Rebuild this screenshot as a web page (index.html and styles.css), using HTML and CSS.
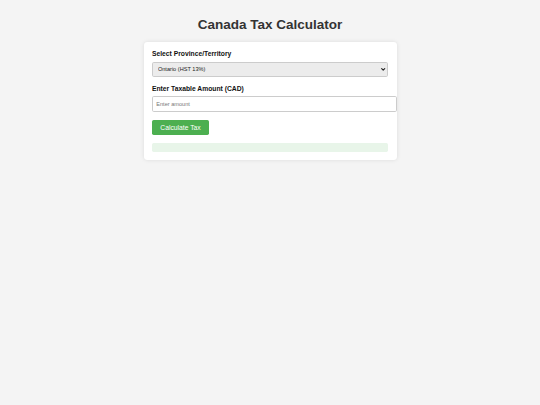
FILE: index.html
```html
<!DOCTYPE html>
<html lang="en">
<head>
<meta charset="UTF-8">
<title>Canada Tax Calculator</title>
<link rel="stylesheet" href="styles.css">
</head>
<body>
  <h1 class="title">Canada Tax Calculator</h1>
  <div class="card">
    <label class="field-label" for="province">Select Province/Territory</label>
    <div class="select-wrap">
      <select id="province" class="select">
        <option>Ontario (HST 13%)</option>
        <option>Alberta (GST 5%)</option>
        <option>British Columbia (GST 5% + PST 7%)</option>
        <option>Quebec (GST 5% + QST 9.975%)</option>
      </select>
      <svg class="chevron" viewBox="0 0 10 7" aria-hidden="true">
        <path d="M1.5 1.5 L5 5 L8.5 1.5" fill="none" stroke="#222" stroke-width="2.6" stroke-linecap="round" stroke-linejoin="round"/>
      </svg>
    </div>
    <label class="field-label" for="amount">Enter Taxable Amount (CAD)</label>
    <input id="amount" class="input" type="number" placeholder="Enter amount">
    <button class="btn" type="button">Calculate Tax</button>
    <div class="result"></div>
  </div>
</body>
</html>
```

FILE: styles.css
```css
html, body {
  margin: 0;
  background: #f4f4f4;
}
body {
  padding: 8.4px;
  font-family: "Liberation Sans", Arial, sans-serif;
  font-size: 6.75px;
  color: #333;
}
.title {
  font-size: 13.5px;
  font-weight: bold;
  text-align: center;
  color: #333;
  margin: 9px 0 9.6px;
}
.card {
  max-width: 253px;
  margin: 0 auto;
  box-sizing: border-box;
  background: #fff;
  padding: 8.4px;
  border-radius: 3.4px;
  box-shadow: 0 0 4px rgba(0, 0, 0, 0.1);
}
.field-label {
  display: block;
  font-weight: bold;
  color: #111;
  margin-bottom: 4.2px;
}
.select-wrap {
  position: relative;
  margin: 0 0 8.4px;
}
.select,
.input {
  display: block;
  width: 100%;
  font-family: "Liberation Sans", Arial, sans-serif;
  font-size: 5.6px;
  border: 0.5px solid #ccc;
  border-radius: 1.7px;
  color: #222;
}
.select {
  box-sizing: border-box;
  -webkit-appearance: none;
  appearance: none;
  background-color: #ececec;
  height: 15.2px;
  padding: 0 10px 0 5px;
  margin: 0;
}
.chevron {
  position: absolute;
  right: 2.6px;
  top: 6.1px;
  width: 4.4px;
  height: 3px;
  pointer-events: none;
}
.input {
  box-sizing: content-box;
  background: #fff;
  height: 7px;
  padding: 3.2px 3.4px;
  margin: 0 0 8.4px;
}
.input::placeholder {
  color: #777;
}
.btn {
  display: block;
  font-family: "Liberation Sans", Arial, sans-serif;
  font-size: 6.75px;
  color: #fff;
  background: #4caf50;
  border: none;
  border-radius: 1.7px;
  padding: 3.9px 8.4px;
  margin: 0 0 8.4px;
  cursor: pointer;
}
.result {
  background: #e8f5e9;
  border-radius: 1.7px;
  padding: 4.3px;
}
```
